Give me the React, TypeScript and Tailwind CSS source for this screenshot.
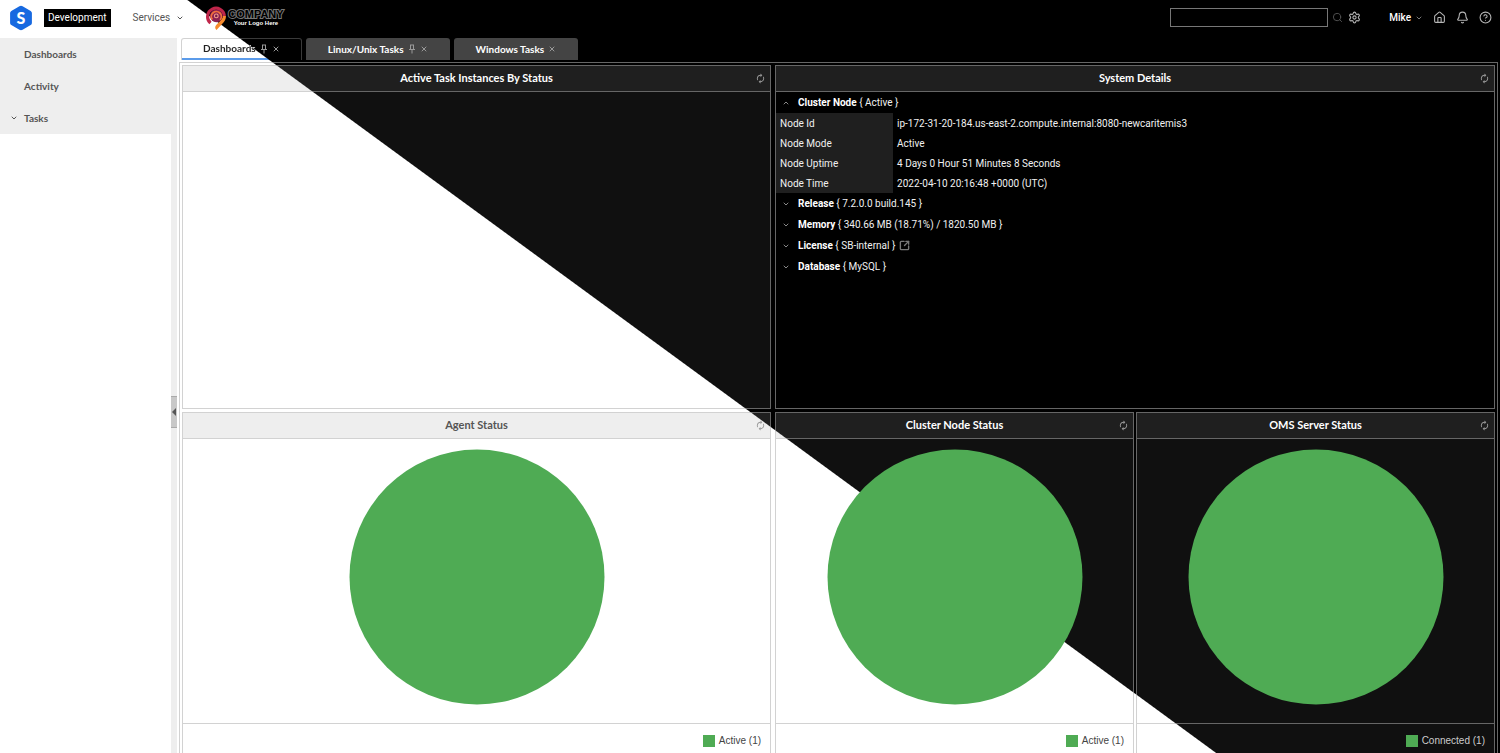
import type { ReactNode } from 'react';
import { Bell, ChevronDown, ChevronUp, CircleHelp, House, Search, Settings, SquareArrowOutUpRight, X } from 'lucide-react';
import { MdAutorenew } from 'react-icons/md';

// Light theme below the diagonal, dark theme above it.
// Fixed backgrounds keep one continuous diagonal across all elements.
const pageBg = 'bg-fixed bg-[linear-gradient(36.2deg,#ffffff_calc(50%-29px),#000000_calc(50%-28px))]';
const bodyBg = 'bg-fixed bg-[linear-gradient(36.2deg,#ffffff_calc(50%-29px),#101010_calc(50%-28px))]';
const headBg = 'bg-fixed bg-[linear-gradient(36.2deg,#eeeeee_calc(50%-29px),#1f1f1f_calc(50%-28px))]';
const lineBg = 'bg-fixed bg-[linear-gradient(36.2deg,#d2d2d2_calc(50%-29px),#666666_calc(50%-28px))]';
const tabLineBg = 'bg-fixed bg-[linear-gradient(36.2deg,#d2d2d2_calc(50%-29px),#3a3a3a_calc(50%-28px))]';
const underlineBg = 'bg-fixed bg-[linear-gradient(36.2deg,#5b9bea_calc(50%-29px),#000000_calc(50%-28px))]';
const tabText = 'bg-fixed bg-clip-text text-transparent bg-[linear-gradient(36.2deg,#222222_calc(50%-29px),#ffffff_calc(50%-28px))]';

function BrandMark() {
  return (
    <svg viewBox="0 0 24 26" className="h-[26px] w-6" role="img" aria-label="S">
      <path
        d="M10.4 1.3a3.2 3.2 0 0 1 3.2 0l8.1 4.6a2.4 2.4 0 0 1 1.2 2.1v10a2.4 2.4 0 0 1-1.2 2.1l-8.1 4.6a3.2 3.2 0 0 1-3.2 0l-8.1-4.6A2.4 2.4 0 0 1 1.1 18V8a2.4 2.4 0 0 1 1.2-2.1z"
        fill="#1769e0"
      />
      <text x="12" y="18.500" textAnchor="middle" fill="#fff" fontSize="16" fontWeight="900" fontFamily="Lato, sans-serif">
        S
      </text>
    </svg>
  );
}

function CompanyLogo() {
  return (
    <div className="flex items-center gap-0.5">
      <svg viewBox="0 0 20 24" className="h-6 w-5" fill="none" aria-hidden="true">
        <path d="M4.500 17A8.400 8.400 0 1 1 18.400 10" stroke="#c0264a" strokeWidth="3.200" />
        <path d="M20 10c0 3-1.500 5.500-3.500 7.500L10.500 24c-1.800-1.500-1.600-3.600-.3-5L15 14c1.200-1.300 1.800-2.600 1.800-4z" fill="#f68a2c" />
        <circle cx="10.300" cy="9.900" r="6.300" fill="#8c2050" />
        <path d="M6.300 13.500a5 5 0 1 1 7.800.300" stroke="#f0703c" strokeWidth="1.800" />
        <circle cx="10.300" cy="9.900" r="2.400" fill="#f7a08a" />
        <circle cx="10.300" cy="9.900" r="1.300" fill="#7a1c4a" />
      </svg>
      <div className="flex flex-col items-center font-['Liberation_Sans',sans-serif]">
        <span className="text-[11px] leading-[10px] font-bold text-black [-webkit-text-stroke:2px_#777777] [paint-order:stroke_fill]">COMPANY</span>
        <span className="text-[6px] leading-[8px] font-bold text-white">Your Logo Here</span>
      </div>
    </div>
  );
}

function TopBar() {
  return (
    <header className="flex h-[38px] shrink-0 items-center pr-2 pb-[3px] pl-[9px] text-[10px]">
      <BrandMark />
      <span className="ml-[11px] bg-black px-1 py-px leading-4 text-white">Development</span>
      <button className="ml-[22px] flex items-center gap-1.5 text-[#555]">
        Services
        <ChevronDown className="size-2" strokeWidth={3} />
      </button>
      <div className="ml-[22px]">
        <CompanyLogo />
      </div>
      <div className="ml-auto flex items-center text-[#b5b5b5]">
        <input type="text" aria-label="Search" className="h-[19px] w-[158px] border border-[#777] bg-black px-1 text-white outline-none" />
        <button aria-label="Run search" className="ml-1 text-[#555]">
          <Search className="size-[11px]" />
        </button>
        <button aria-label="Settings" className="ml-[5px]">
          <Settings className="size-[13px]" />
        </button>
        <button className="ml-7 flex items-center gap-1 font-medium text-white">
          Mike
          <ChevronDown className="size-2 text-[#b5b5b5]" />
        </button>
        <a href="#home" aria-label="Home" className="ml-2.5">
          <House className="size-[13px]" />
        </a>
        <button aria-label="Notifications" className="ml-2.5">
          <Bell className="size-[13px]" />
        </button>
        <a href="#help" aria-label="Help" className="ml-2.5">
          <CircleHelp className="size-[13px]" />
        </a>
      </div>
    </header>
  );
}

function Sidebar() {
  return (
    <>
      <aside className="w-[171px] shrink-0 bg-white">
        <nav className="flex flex-col bg-[#eeeeee] font-['Lato',sans-serif] text-[10px] font-bold text-[#555]">
          <a href="#dashboards" className="flex h-8 items-center pl-6">
            Dashboards
          </a>
          <a href="#activity" className="flex h-8 items-center pl-6">
            Activity
          </a>
          <a href="#tasks" className="flex h-8 items-center gap-1.5 pl-2.5">
            <ChevronDown className="size-2" strokeWidth={3} />
            Tasks
          </a>
        </nav>
      </aside>
      <div className="flex w-1.5 shrink-0 items-center bg-[#eeeeee]">
        <button aria-label="Collapse sidebar" className="mt-8 flex h-8 w-full items-center justify-center border-y border-[#aaa] bg-[#c8c8c8]">
          <svg viewBox="0 0 4 8" className="h-2 w-1" fill="#555" aria-hidden="true">
            <path d="M4 0 0 4l4 4z" />
          </svg>
        </button>
      </div>
    </>
  );
}

function PinIcon() {
  return (
    <svg viewBox="0 0 8 10" className="h-2.5 w-2" fill="none" stroke="currentColor" aria-hidden="true">
      <path d="M2 1h4M2.500 1v4M5.500 1v4M1 5.500h6M4 5.500V9.500" />
    </svg>
  );
}

function Tabs() {
  return (
    <div className="flex h-6 shrink-0 gap-1 pl-1 font-['Lato',sans-serif] text-[10px] text-[#999]" role="tablist">
      <button role="tab" aria-selected="true" className={`h-[22px] rounded-t-[3px] p-px pb-0 ${tabLineBg}`}>
        <span className={`flex h-full flex-col rounded-t-[2px] ${pageBg}`}>
          <span className="flex flex-1 items-center gap-1 px-[21px]">
            <span className={`font-bold ${tabText}`}>Dashboards</span>
            <PinIcon />
            <X className="size-2" strokeWidth={3} />
          </span>
          <span className={`h-0.5 ${underlineBg}`} />
        </span>
      </button>
      <button role="tab" aria-selected="false" className="flex h-[22px] items-center gap-1 rounded-t-[3px] bg-[#444] px-[22px]">
        <span className="font-bold text-white">Linux/Unix Tasks</span>
        <PinIcon />
        <X className="size-2" strokeWidth={3} />
      </button>
      <button role="tab" aria-selected="false" className="flex h-[22px] items-center gap-1 rounded-t-[3px] bg-[#444] px-[22px]">
        <span className="font-bold text-white">Windows Tasks</span>
        <X className="size-2" strokeWidth={3} />
      </button>
    </div>
  );
}

type PanelProps = { title: string; light?: boolean; className?: string; children?: ReactNode };

function Panel({ title, light, className = '', children }: PanelProps) {
  return (
    <section className={`flex min-h-0 min-w-0 flex-col gap-px p-px ${lineBg} ${className}`}>
      <div className={`relative flex h-[25px] shrink-0 items-center justify-center ${headBg}`}>
        <h2 className={`font-['Lato',sans-serif] text-[11px] font-bold ${light ? 'text-[#555]' : 'text-white'}`}>{title}</h2>
        <button aria-label={`Refresh ${title}`} className="absolute right-1 text-[#999]">
          <MdAutorenew className="size-[11px]" />
        </button>
      </div>
      {children ?? <div className={`flex-1 ${bodyBg}`} />}
    </section>
  );
}

type StatusPanelProps = { title: string; legend: string; light?: boolean; lightLegend?: boolean };

function StatusPanel({ title, legend, light, lightLegend }: StatusPanelProps) {
  return (
    <Panel title={title} light={light} className="pb-0">
      <div className={`flex min-h-0 flex-1 justify-center pt-2.5 ${bodyBg}`}>
        <svg viewBox="0 0 256 256" className="size-64" role="img" aria-label={legend}>
          <circle cx="128" cy="128" r="127.500" fill="#4fab54" />
        </svg>
      </div>
      <div className={`flex h-[29px] shrink-0 items-center justify-end gap-1 pt-1 pr-[9px] ${bodyBg}`}>
        <span className="size-3 bg-[#4fab54]" />
        <span className={`font-['Liberation_Sans',sans-serif] text-[10px] ${lightLegend ? 'text-[#444]' : 'text-[#ccc]'}`}>{legend}</span>
      </div>
    </Panel>
  );
}

const nodeRows = [
  ['Node Id', 'ip-172-31-20-184.us-east-2.compute.internal:8080-newcaritemis3'],
  ['Node Mode', 'Active'],
  ['Node Uptime', '4 Days 0 Hour 51 Minutes 8 Seconds'],
  ['Node Time', '2022-04-10 20:16:48 +0000 (UTC)'],
];

const sections = [
  ['Release', '{ 7.2.0.0 build.145 }'],
  ['Memory', '{ 340.66 MB (18.71%) / 1820.50 MB }'],
  ['License', '{ SB-internal }'],
  ['Database', '{ MySQL }'],
];

function SystemDetails() {
  return (
    <div className="flex-1 bg-black text-[10px] text-[#f0f0f0]">
      <button aria-expanded="true" className="flex h-[21px] items-center pl-1.5">
        <ChevronUp className="mr-2 size-2 text-[#888]" strokeWidth={3} />
        <span>
          <b className="text-white">Cluster Node</b> {'{ Active }'}
        </span>
      </button>
      <table className="border-collapse text-left">
        <tbody>
          {nodeRows.map(([name, value]) => (
            <tr key={name} className="h-5">
              <th scope="row" className="w-[117px] bg-[#1f1f1f] p-0 pl-1 font-normal">
                {name}
              </th>
              <td className="p-0 pl-1">{value}</td>
            </tr>
          ))}
        </tbody>
      </table>
      {sections.map(([name, value]) => (
        <div key={name} className="flex h-[21px] items-center gap-1">
          <button aria-expanded="false" className="flex items-center pl-1.5">
            <ChevronDown className="mr-2 size-2 text-[#888]" strokeWidth={3} />
            <span>
              <b className="text-white">{name}</b> {value}
            </span>
          </button>
          {name === 'License' && (
            <a href="#license" aria-label="Open license">
              <SquareArrowOutUpRight className="size-[11px] text-[#777]" strokeWidth={3} />
            </a>
          )}
        </div>
      ))}
    </div>
  );
}

export default function App() {
  return (
    <div className={`flex h-screen flex-col overflow-hidden font-['Roboto',sans-serif] ${pageBg}`}>
      <TopBar />
      <div className="flex min-h-0 flex-1">
        <Sidebar />
        <main className="flex min-w-0 flex-1 flex-col">
          <Tabs />
          {/* Dashboard frame */}
          <div className={`mx-0.5 flex min-h-0 flex-1 p-px pb-0 ${lineBg}`}>
            <div className={`grid min-h-0 flex-1 grid-rows-[344fr_341fr] gap-[3px] p-0.5 pb-0 ${pageBg}`}>
              <div className="grid min-h-0 grid-cols-[45fr_55fr] gap-1">
                <Panel title="Active Task Instances By Status" />
                <Panel title="System Details">
                  <SystemDetails />
                </Panel>
              </div>
              <div className="grid min-h-0 grid-cols-[45fr_55fr] gap-1">
                <StatusPanel title="Agent Status" legend="Active (1)" light lightLegend />
                <div className="grid min-h-0 grid-cols-2 gap-0.5">
                  <StatusPanel title="Cluster Node Status" legend="Active (1)" lightLegend />
                  <StatusPanel title="OMS Server Status" legend="Connected (1)" />
                </div>
              </div>
            </div>
          </div>
        </main>
      </div>
    </div>
  );
}
